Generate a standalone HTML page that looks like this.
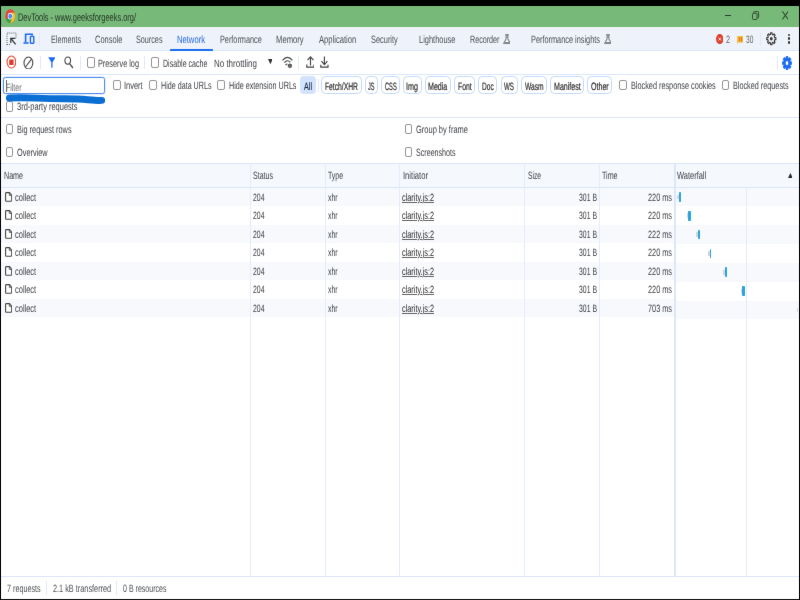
<!DOCTYPE html>
<html><head><meta charset="utf-8"><title>DevTools - www.geeksforgeeks.org/</title>
<style>
html,body{margin:0;padding:0;width:800px;height:600px;overflow:hidden;background:#000;}
body{position:relative;font-family:"Liberation Sans",sans-serif;text-rendering:geometricPrecision;}
#w{position:absolute;left:0;top:0;width:800px;height:600px;filter:url(#soft);}
.r{position:absolute;display:block;}
.t{position:absolute;display:block;white-space:nowrap;line-height:1;}
.cb{position:absolute;border:1px solid #949494;border-radius:2px;background:#fff;}
</style></head><body>
<svg width="0" height="0" style="position:absolute"><filter id="soft" x="0" y="0" width="100%" height="100%" color-interpolation-filters="sRGB"><feConvolveMatrix order="3" kernelMatrix="0 0.055 0 0.055 0.78 0.055 0 0.055 0" edgeMode="duplicate" preserveAlpha="true"/></filter></svg>
<div id="w">
<div class="r" style="left:-20.00px;top:-20.00px;width:840.00px;height:640.00px;background:#000;"></div>
<div class="r" style="left:1.00px;top:6.20px;width:797.75px;height:20.80px;background:#77b979;"></div>
<div class="r" style="left:1.00px;top:27.00px;width:797.75px;height:23.00px;background:#eef2fa;"></div>
<div class="r" style="left:1.00px;top:50.00px;width:797.75px;height:548.60px;background:#fff;"></div>
<div class="r" style="left:1.00px;top:50.00px;width:797.75px;height:1.00px;background:#dbe6fb;"></div>
<div class="r" style="left:1.00px;top:73.50px;width:797.75px;height:1.00px;background:#dbe6fb;"></div>
<div class="r" style="left:1.00px;top:117.00px;width:797.75px;height:1.00px;background:#dbe6fb;"></div>
<span class="t" style="left:18.00px;transform-origin:0 0;top:13.00px;font-size:11px;color:#243524;transform:scaleX(0.6748);">DevTools - www.geeksforgeeks.org/</span>
<svg class="r" style="left:4.90px;top:9.30px;" width="10.50" height="14.30" viewBox="0 0 20 20" preserveAspectRatio="none"><circle cx="10" cy="10" r="9.5" fill="#e8453c"/>
<path d="M10 10 L1.8 14.8 A9.5 9.5 0 0 0 10 19.5 L14.2 12.4 Z" fill="#2da94f"/>
<path d="M10 10 L14.2 12.4 L10 19.5 A9.5 9.5 0 0 0 18.2 5.2 L10 5.2 Z" fill="#fbc116"/>
<circle cx="10" cy="10" r="4.6" fill="#fff"/><circle cx="10" cy="10" r="3.6" fill="#4a8af4"/></svg>
<div class="r" style="left:724.60px;top:14.80px;width:6.60px;height:0.90px;background:#2a402a;"></div>
<svg class="r" style="left:752.40px;top:10.80px;" width="7.20" height="9.20" viewBox="0 0 8 9.5" preserveAspectRatio="none"><rect x="0.6" y="2.4" width="5" height="6.4" rx="1" fill="none" stroke="#2a402a" stroke-width="0.95"/><path d="M2 2.2 V1.4 Q2 0.6 2.8 0.6 H6.4 Q7.3 0.6 7.3 1.5 V6.5 Q7.3 7.3 6.4 7.3" fill="none" stroke="#2a402a" stroke-width="0.95"/></svg>
<svg class="r" style="left:781.80px;top:11.20px;" width="6.60" height="8.70" viewBox="0 0 7.5 8" preserveAspectRatio="none"><path d="M0.4 0.3 L7.1 7.7 M7.1 0.3 L0.4 7.7" stroke="#2a402a" stroke-width="0.95" fill="none"/></svg>
<svg class="r" style="left:5.50px;top:32.00px;" width="11.00" height="13.50" viewBox="0 0 11 13.5" preserveAspectRatio="none"><path d="M1 13 V1 H10 V6" fill="none" stroke="#5a5a5a" stroke-width="1" stroke-dasharray="1 1.05"/><path d="M1 12.6 H4.4" fill="none" stroke="#5a5a5a" stroke-width="1" stroke-dasharray="1 1.05"/><path d="M4.9 6.4 L9.6 12.3" stroke="#333" stroke-width="1.3" fill="none"/><path d="M4.8 11 V6.3 H9.4" stroke="#333" stroke-width="1.2" fill="none"/></svg>
<svg class="r" style="left:22.50px;top:33.00px;" width="12.00" height="11.50" viewBox="0 0 12 11.5" preserveAspectRatio="none"><path d="M2.6 9.2 V1.3 H10" fill="none" stroke="#1b6af2" stroke-width="1.6"/><rect x="7.4" y="3.3" width="3.4" height="7" rx="0.8" fill="none" stroke="#1b6af2" stroke-width="1.4"/><path d="M0.5 10 H5.6" stroke="#1b6af2" stroke-width="1.6"/></svg>
<div class="r" style="left:39.40px;top:32.00px;width:1.00px;height:13.60px;background:#e1e9fa;"></div>
<span class="t" style="left:51.00px;transform-origin:0 0;top:35.00px;font-size:10.6px;color:#4d5055;transform:scaleX(0.6789);">Elements</span>
<span class="t" style="left:95.00px;transform-origin:0 0;top:35.00px;font-size:10.6px;color:#4d5055;transform:scaleX(0.7071);">Console</span>
<span class="t" style="left:136.00px;transform-origin:0 0;top:35.00px;font-size:10.6px;color:#4d5055;transform:scaleX(0.6815);">Sources</span>
<span class="t" style="left:220.00px;transform-origin:0 0;top:35.00px;font-size:10.6px;color:#4d5055;transform:scaleX(0.6872);">Performance</span>
<span class="t" style="left:276.00px;transform-origin:0 0;top:35.00px;font-size:10.6px;color:#4d5055;transform:scaleX(0.7236);">Memory</span>
<span class="t" style="left:318.70px;transform-origin:0 0;top:35.00px;font-size:10.6px;color:#4d5055;transform:scaleX(0.7193);">Application</span>
<span class="t" style="left:370.70px;transform-origin:0 0;top:35.00px;font-size:10.6px;color:#4d5055;transform:scaleX(0.6999);">Security</span>
<span class="t" style="left:419.00px;transform-origin:0 0;top:35.00px;font-size:10.6px;color:#4d5055;transform:scaleX(0.7037);">Lighthouse</span>
<span class="t" style="left:470.00px;transform-origin:0 0;top:35.00px;font-size:10.6px;color:#4d5055;transform:scaleX(0.6766);">Recorder</span>
<span class="t" style="left:531.00px;transform-origin:0 0;top:35.00px;font-size:10.6px;color:#4d5055;transform:scaleX(0.6930);">Performance insights</span>
<span class="t" style="left:177.40px;transform-origin:0 0;top:35.00px;font-size:10.6px;color:#2468e0;transform:scaleX(0.7202);">Network</span>
<div class="r" style="left:170.00px;top:49.00px;width:43.30px;height:2.00px;background:#1a6df0;border-radius:1px 1px 0 0;"></div>
<svg class="r" style="left:502.70px;top:33.60px;" width="7.80" height="10.50" viewBox="0 0 8 10.6" preserveAspectRatio="none"><path d="M2.3 0.85 H5.9" stroke="#555" stroke-width="1"/><path d="M3.25 1.2 V4.8 L0.8 9.2 Q0.5 10 1.3 10 H6.9 Q7.7 10 7.4 9.2 L4.95 4.8 V1.2" fill="none" stroke="#555" stroke-width="0.9"/><path d="M1.2 9.6 L2 8.3 H6.2 L7 9.6 Z" fill="#666"/></svg>
<svg class="r" style="left:603.70px;top:33.60px;" width="7.80" height="10.50" viewBox="0 0 8 10.6" preserveAspectRatio="none"><path d="M2.3 0.85 H5.9" stroke="#555" stroke-width="1"/><path d="M3.25 1.2 V4.8 L0.8 9.2 Q0.5 10 1.3 10 H6.9 Q7.7 10 7.4 9.2 L4.95 4.8 V1.2" fill="none" stroke="#555" stroke-width="0.9"/><path d="M1.2 9.6 L2 8.3 H6.2 L7 9.6 Z" fill="#666"/></svg>
<svg class="r" style="left:715.90px;top:33.80px;" width="7.50" height="10.10" viewBox="0 0 7 10" preserveAspectRatio="none"><ellipse cx="3.5" cy="5" rx="3.5" ry="5" fill="#e0402e"/><path d="M2.4 3.6 L4.6 6.4 M4.6 3.6 L2.4 6.4" stroke="#fff" stroke-width="0.8"/></svg>
<span class="t" style="left:725.90px;transform-origin:0 0;top:35.00px;font-size:10.6px;color:#666;transform:scaleX(0.6955);">2</span>
<svg class="r" style="left:736.90px;top:35.50px;" width="6.20" height="8.00" viewBox="0 0 6.2 8" preserveAspectRatio="none"><path d="M0.1 0.5 Q0.1 0.1 0.5 0.1 H5.7 Q6.1 0.1 6.1 0.5 V6.1 Q6.1 6.5 5.7 6.5 H1.4 L0.1 7.9 Z" fill="#f3bf2e"/><rect x="1.9" y="1.2" width="1" height="4.2" fill="#e8663a"/><path d="M3.6 1.6 H5 M3.6 3.3 H5 M3.6 5 H5 M4.6 1.4 V5.2" stroke="#e8663a" stroke-width="0.8" fill="none"/></svg>
<span class="t" style="left:745.75px;transform-origin:0 0;top:35.00px;font-size:10.6px;color:#666;transform:scaleX(0.6234);">30</span>
<div class="r" style="left:760.00px;top:33.00px;width:1.00px;height:12.50px;background:#e1e9fa;"></div>
<svg class="r" style="left:766.40px;top:32.40px;" width="10.60" height="13.40" viewBox="0 0 20 20" preserveAspectRatio="none"><path d="M8.41 3.59 L8.56 1.32 L11.44 1.32 L11.59 3.59 L13.40 4.35 L15.12 2.84 L17.16 4.88 L15.65 6.60 L16.41 8.41 L18.68 8.56 L18.68 11.44 L16.41 11.59 L15.65 13.40 L17.16 15.12 L15.12 17.16 L13.40 15.65 L11.59 16.41 L11.44 18.68 L8.56 18.68 L8.41 16.41 L6.60 15.65 L4.88 17.16 L2.84 15.12 L4.35 13.40 L3.59 11.59 L1.32 11.44 L1.32 8.56 L3.59 8.41 L4.35 6.60 L2.84 4.88 L4.88 2.84 L6.60 4.35 Z" fill="none" stroke="#3a3a3a" stroke-width="2" stroke-linejoin="round"/><circle cx="10" cy="10" r="2.7" fill="#3a3a3a"/></svg>
<div class="r" style="left:787.60px;top:33.55px;width:2.60px;height:2.40px;background:#333;border-radius:1.2px;"></div>
<div class="r" style="left:787.60px;top:37.40px;width:2.60px;height:2.40px;background:#333;border-radius:1.2px;"></div>
<div class="r" style="left:787.60px;top:41.30px;width:2.60px;height:2.40px;background:#333;border-radius:1.2px;"></div>
<svg class="r" style="left:5.60px;top:55.40px;" width="10.80" height="14.00" viewBox="0 0 10.8 14" preserveAspectRatio="none"><ellipse cx="5.4" cy="7" rx="4.35" ry="5.95" fill="none" stroke="#e0472f" stroke-width="1.1"/><rect x="3.2" y="4.5" width="4.4" height="5.5" rx="0.5" fill="#de3b2e"/></svg>
<svg class="r" style="left:22.80px;top:55.50px;" width="10.80" height="13.90" viewBox="0 0 10.8 13.9" preserveAspectRatio="none"><ellipse cx="5.4" cy="7" rx="4.4" ry="6" fill="none" stroke="#444" stroke-width="1.05"/><path d="M8.7 2.9 L2.5 11" stroke="#444" stroke-width="1.05"/></svg>
<div class="r" style="left:39.60px;top:56.00px;width:1.00px;height:13.40px;background:#e1e9fa;"></div>
<svg class="r" style="left:47.70px;top:57.20px;" width="7.80" height="11.10" viewBox="0 0 8 11.3" preserveAspectRatio="none"><path d="M0.2 0.3 H7.8 L4.65 5.4 V10.7 Q4 11.3 3.35 10.7 V5.4 Z" fill="#1b6af2"/></svg>
<svg class="r" style="left:63.90px;top:56.40px;" width="9.80" height="12.80" viewBox="0 0 10 12.8" preserveAspectRatio="none"><ellipse cx="3.8" cy="4.6" rx="2.9" ry="3.6" fill="none" stroke="#444" stroke-width="1.1"/><path d="M5.7 7.6 L9.1 12" stroke="#444" stroke-width="1.25"/></svg>
<div class="r" style="left:80.10px;top:56.00px;width:1.00px;height:13.50px;background:#e1e9fa;"></div>
<div class="cb" style="left:86.70px;top:57.30px;width:5.90px;height:8.40px;"></div>
<span class="t" style="left:98.00px;transform-origin:0 0;top:59.00px;font-size:10.6px;color:#3b3e43;transform:scaleX(0.6890);">Preserve log</span>
<div class="r" style="left:144.30px;top:56.00px;width:1.00px;height:13.00px;background:#e1e9fa;"></div>
<div class="cb" style="left:150.90px;top:57.30px;width:5.90px;height:8.40px;"></div>
<span class="t" style="left:162.50px;transform-origin:0 0;top:59.00px;font-size:10.6px;color:#3b3e43;transform:scaleX(0.6683);">Disable cache</span>
<span class="t" style="left:214.00px;transform-origin:0 0;top:59.00px;font-size:10.6px;color:#3b3e43;transform:scaleX(0.7524);">No throttling</span>
<svg class="r" style="left:267.60px;top:59.40px;" width="4.80" height="5.20" viewBox="0 0 5 5" preserveAspectRatio="none"><path d="M0 0 H5 L2.5 5 Z" fill="#333"/></svg>
<svg class="r" style="left:281.80px;top:56.00px;" width="11.40" height="12.60" viewBox="0 0 11.4 12.6" preserveAspectRatio="none"><path d="M0.5 4.4 Q5.4 -1.6 10.4 4.4" fill="none" stroke="#444" stroke-width="1.15"/><path d="M2.4 6.7 Q5.4 3 8.4 6.4" fill="none" stroke="#444" stroke-width="1.15"/><path d="M3.6 9.2 Q4.4 8 5.4 8" fill="none" stroke="#444" stroke-width="1.2"/><circle cx="7.9" cy="9.8" r="1.5" fill="none" stroke="#555" stroke-width="1.3"/><path d="M7.9 7.4 V12.2 M5.8 8.6 L10 11 M5.8 11 L10 8.6" stroke="#555" stroke-width="0.7"/></svg>
<div class="r" style="left:298.00px;top:56.00px;width:1.00px;height:13.50px;background:#e1e9fa;"></div>
<svg class="r" style="left:305.60px;top:56.40px;" width="8.80" height="12.20" viewBox="0 0 8.8 12.2" preserveAspectRatio="none"><path d="M4.5 9.4 V1.2 M1.5 4.2 L4.5 0.9 L7.5 4.2" fill="none" stroke="#444" stroke-width="1.15"/><path d="M0.8 8.6 V11.2 H8 V8.6" fill="none" stroke="#444" stroke-width="1.15"/></svg>
<svg class="r" style="left:320.40px;top:56.40px;" width="8.80" height="12.20" viewBox="0 0 8.8 12.2" preserveAspectRatio="none"><path d="M4.4 0.6 V8.2 M1.4 5.2 L4.4 8.6 L7.4 5.2" fill="none" stroke="#444" stroke-width="1.15"/><path d="M0.8 8.8 V11.2 H8 V8.8" fill="none" stroke="#444" stroke-width="1.15"/></svg>
<div class="r" style="left:777.20px;top:56.00px;width:1.00px;height:13.50px;background:#e1e9fa;"></div>
<svg class="r" style="left:781.60px;top:55.80px;" width="10.00" height="14.20" viewBox="0 0 20 20" preserveAspectRatio="none"><path fill-rule="evenodd" d="M7.99 3.09 L8.13 0.58 L11.87 0.58 L12.01 3.09 L13.47 3.69 L15.33 2.02 L17.98 4.67 L16.31 6.53 L16.91 7.99 L19.42 8.13 L19.42 11.87 L16.91 12.01 L16.31 13.47 L17.98 15.33 L15.33 17.98 L13.47 16.31 L12.01 16.91 L11.87 19.42 L8.13 19.42 L7.99 16.91 L6.53 16.31 L4.67 17.98 L2.02 15.33 L3.69 13.47 L3.09 12.01 L0.58 11.87 L0.58 8.13 L3.09 7.99 L3.69 6.53 L2.02 4.67 L4.67 2.02 L6.53 3.69 Z M10 6.6 a3.4 3.4 0 1 0 0.001 0 z" fill="#1b6af2" stroke="#1b6af2" stroke-width="1.2" stroke-linejoin="round"/></svg>
<div class="r" style="left:3.2px;top:76.7px;width:99.8px;height:15.2px;border:1px solid #4f8ef0;border-radius:2.5px;background:#fff;box-shadow:0 0 0 0.5px #c9dcfa;"></div>
<div class="r" style="left:5.70px;top:79.60px;width:0.80px;height:12.80px;background:#666;"></div>
<span class="t" style="left:6.20px;transform-origin:0 0;top:83.00px;font-size:10.6px;color:#686c72;transform:scaleX(0.6580);">Filter</span>
<svg class="r" style="left:4.00px;top:93.00px;z-index:5;" width="104.00" height="13.00" viewBox="0 0 104 13" preserveAspectRatio="none"><path d="M5.4 5.0 Q18 4.5 32 5.1 T60 5.7 T84 6.7 T97.7 7.4" fill="none" stroke="#0b6fd4" stroke-width="6.9" stroke-linecap="round" stroke-linejoin="round"/></svg>
<div class="cb" style="left:112.90px;top:80.00px;width:5.90px;height:8.40px;"></div>
<span class="t" style="left:124.40px;transform-origin:0 0;top:81.00px;font-size:10.6px;color:#3b3e43;transform:scaleX(0.7016);">Invert</span>
<div class="cb" style="left:149.20px;top:80.00px;width:5.90px;height:8.40px;"></div>
<span class="t" style="left:160.70px;transform-origin:0 0;top:81.00px;font-size:10.6px;color:#3b3e43;transform:scaleX(0.6749);">Hide data URLs</span>
<div class="cb" style="left:217.20px;top:80.00px;width:5.90px;height:8.40px;"></div>
<span class="t" style="left:228.70px;transform-origin:0 0;top:81.00px;font-size:10.6px;color:#3b3e43;transform:scaleX(0.6779);">Hide extension URLs</span>
<div class="r" style="left:299.9px;top:76.1px;width:16px;height:18.4px;border-radius:4px;background:#d3e3fd;"></div>
<span class="t" style="left:303.70px;transform-origin:0 0;top:82.00px;font-size:10.6px;color:#1d2a44;transform:scaleX(0.6791);-webkit-text-stroke:0.2px #1d2a44;">All</span>
<div class="r" style="left:318.10px;top:78.80px;width:0.90px;height:13.20px;background:#e1e9fa;"></div>
<div class="r" style="left:321.2px;top:76.1px;width:38.50px;height:16.4px;border:1px solid #c3d9fb;border-radius:4.5px;background:#fff;"></div>
<span class="t" style="left:325.00px;transform-origin:0 0;top:82.00px;font-size:10.6px;color:#2a2a2a;transform:scaleX(0.6366);-webkit-text-stroke:0.2px #2a2a2a;">Fetch/XHR</span>
<div class="r" style="left:364.5px;top:76.1px;width:11.50px;height:16.4px;border:1px solid #c3d9fb;border-radius:4.5px;background:#fff;"></div>
<span class="t" style="left:368.00px;transform-origin:0 0;top:82.00px;font-size:10.6px;color:#2a2a2a;transform:scaleX(0.5254);-webkit-text-stroke:0.2px #2a2a2a;">JS</span>
<div class="r" style="left:380.7px;top:76.1px;width:17.30px;height:16.4px;border:1px solid #c3d9fb;border-radius:4.5px;background:#fff;"></div>
<span class="t" style="left:384.50px;transform-origin:0 0;top:82.00px;font-size:10.6px;color:#2a2a2a;transform:scaleX(0.5368);-webkit-text-stroke:0.2px #2a2a2a;">CSS</span>
<div class="r" style="left:402.5px;top:76.1px;width:17.50px;height:16.4px;border:1px solid #c3d9fb;border-radius:4.5px;background:#fff;"></div>
<span class="t" style="left:406.20px;transform-origin:0 0;top:82.00px;font-size:10.6px;color:#2a2a2a;transform:scaleX(0.6791);-webkit-text-stroke:0.2px #2a2a2a;">Img</span>
<div class="r" style="left:424.5px;top:76.1px;width:24.70px;height:16.4px;border:1px solid #c3d9fb;border-radius:4.5px;background:#fff;"></div>
<span class="t" style="left:428.20px;transform-origin:0 0;top:82.00px;font-size:10.6px;color:#2a2a2a;transform:scaleX(0.6685);-webkit-text-stroke:0.2px #2a2a2a;">Media</span>
<div class="r" style="left:454.2px;top:76.1px;width:19.30px;height:16.4px;border:1px solid #c3d9fb;border-radius:4.5px;background:#fff;"></div>
<span class="t" style="left:458.00px;transform-origin:0 0;top:82.00px;font-size:10.6px;color:#2a2a2a;transform:scaleX(0.6459);-webkit-text-stroke:0.2px #2a2a2a;">Font</span>
<div class="r" style="left:478.2px;top:76.1px;width:17.30px;height:16.4px;border:1px solid #c3d9fb;border-radius:4.5px;background:#fff;"></div>
<span class="t" style="left:482.00px;transform-origin:0 0;top:82.00px;font-size:10.6px;color:#2a2a2a;transform:scaleX(0.6207);-webkit-text-stroke:0.2px #2a2a2a;">Doc</span>
<div class="r" style="left:500.5px;top:76.1px;width:15.50px;height:16.4px;border:1px solid #c3d9fb;border-radius:4.5px;background:#fff;"></div>
<span class="t" style="left:504.20px;transform-origin:0 0;top:82.00px;font-size:10.6px;color:#2a2a2a;transform:scaleX(0.5856);-webkit-text-stroke:0.2px #2a2a2a;">WS</span>
<div class="r" style="left:520.5px;top:76.1px;width:24.50px;height:16.4px;border:1px solid #c3d9fb;border-radius:4.5px;background:#fff;"></div>
<span class="t" style="left:524.50px;transform-origin:0 0;top:82.00px;font-size:10.6px;color:#2a2a2a;transform:scaleX(0.6310);-webkit-text-stroke:0.2px #2a2a2a;">Wasm</span>
<div class="r" style="left:550px;top:76.1px;width:32.20px;height:16.4px;border:1px solid #c3d9fb;border-radius:4.5px;background:#fff;"></div>
<span class="t" style="left:553.70px;transform-origin:0 0;top:82.00px;font-size:10.6px;color:#2a2a2a;transform:scaleX(0.6690);-webkit-text-stroke:0.2px #2a2a2a;">Manifest</span>
<div class="r" style="left:586.7px;top:76.1px;width:23.30px;height:16.4px;border:1px solid #c3d9fb;border-radius:4.5px;background:#fff;"></div>
<span class="t" style="left:590.50px;transform-origin:0 0;top:82.00px;font-size:10.6px;color:#2a2a2a;transform:scaleX(0.6677);-webkit-text-stroke:0.2px #2a2a2a;">Other</span>
<div class="cb" style="left:619.40px;top:80.00px;width:5.90px;height:8.40px;"></div>
<span class="t" style="left:630.70px;transform-origin:0 0;top:81.00px;font-size:10.6px;color:#3b3e43;transform:scaleX(0.6886);">Blocked response cookies</span>
<div class="cb" style="left:721.60px;top:80.00px;width:5.90px;height:8.40px;"></div>
<span class="t" style="left:733.00px;transform-origin:0 0;top:81.00px;font-size:10.6px;color:#3b3e43;transform:scaleX(0.6850);">Blocked requests</span>
<div class="cb" style="left:5.50px;top:101.20px;width:5.90px;height:8.40px;"></div>
<span class="t" style="left:17.00px;transform-origin:0 0;top:102.00px;font-size:10.6px;color:#3b3e43;transform:scaleX(0.7045);">3rd-party requests</span>
<div class="cb" style="left:5.50px;top:124.00px;width:5.90px;height:8.40px;"></div>
<span class="t" style="left:17.00px;transform-origin:0 0;top:125.00px;font-size:10.6px;color:#3b3e43;transform:scaleX(0.6916);">Big request rows</span>
<div class="cb" style="left:5.50px;top:147.10px;width:5.90px;height:8.40px;"></div>
<span class="t" style="left:17.00px;transform-origin:0 0;top:148.00px;font-size:10.6px;color:#3b3e43;transform:scaleX(0.6927);">Overview</span>
<div class="cb" style="left:404.60px;top:124.00px;width:5.90px;height:8.40px;"></div>
<span class="t" style="left:416.00px;transform-origin:0 0;top:125.00px;font-size:10.6px;color:#3b3e43;transform:scaleX(0.7061);">Group by frame</span>
<div class="cb" style="left:404.60px;top:147.10px;width:5.90px;height:8.40px;"></div>
<span class="t" style="left:416.00px;transform-origin:0 0;top:148.00px;font-size:10.6px;color:#3b3e43;transform:scaleX(0.6721);">Screenshots</span>
<div class="r" style="left:1.00px;top:163.00px;width:797.75px;height:24.50px;background:#f5f8fd;"></div>
<div class="r" style="left:1.00px;top:163.00px;width:797.75px;height:1.00px;background:#dbe6fb;"></div>
<div class="r" style="left:1.00px;top:187.00px;width:797.75px;height:1.00px;background:#dbe6fb;"></div>
<div class="r" style="left:1.00px;top:187.50px;width:673.00px;height:18.50px;background:#f7f9fd;"></div>
<div class="r" style="left:674.00px;top:187.50px;width:124.75px;height:18.85px;background:#f7f9fd;"></div>
<div class="r" style="left:1.00px;top:224.50px;width:673.00px;height:18.50px;background:#f7f9fd;"></div>
<div class="r" style="left:674.00px;top:225.20px;width:124.75px;height:18.85px;background:#f7f9fd;"></div>
<div class="r" style="left:1.00px;top:261.50px;width:673.00px;height:18.50px;background:#f7f9fd;"></div>
<div class="r" style="left:674.00px;top:262.90px;width:124.75px;height:18.85px;background:#f7f9fd;"></div>
<div class="r" style="left:1.00px;top:298.50px;width:673.00px;height:18.50px;background:#f7f9fd;"></div>
<div class="r" style="left:674.00px;top:300.60px;width:124.75px;height:18.85px;background:#f7f9fd;"></div>
<div class="r" style="left:673.90px;top:163.00px;width:1.70px;height:413.00px;background:#dde7fb;"></div>
<div class="r" style="left:249.70px;top:163.00px;width:1.00px;height:413.00px;background:#e4ecfb;"></div>
<div class="r" style="left:325.00px;top:163.00px;width:1.00px;height:413.00px;background:#e4ecfb;"></div>
<div class="r" style="left:398.90px;top:163.00px;width:1.00px;height:413.00px;background:#e4ecfb;"></div>
<div class="r" style="left:524.10px;top:163.00px;width:1.00px;height:413.00px;background:#e4ecfb;"></div>
<div class="r" style="left:599.10px;top:163.00px;width:1.00px;height:413.00px;background:#e4ecfb;"></div>
<div class="r" style="left:746.20px;top:188.00px;width:1.00px;height:388.00px;background:#e4ecfb;"></div>
<span class="t" style="left:3.60px;transform-origin:0 0;top:171.00px;font-size:10.6px;color:#3b3e43;transform:scaleX(0.6719);">Name</span>
<span class="t" style="left:253.00px;transform-origin:0 0;top:171.00px;font-size:10.6px;color:#3b3e43;transform:scaleX(0.6655);">Status</span>
<span class="t" style="left:328.00px;transform-origin:0 0;top:171.00px;font-size:10.6px;color:#3b3e43;transform:scaleX(0.6527);">Type</span>
<span class="t" style="left:402.50px;transform-origin:0 0;top:171.00px;font-size:10.6px;color:#3b3e43;transform:scaleX(0.7192);">Initiator</span>
<span class="t" style="left:527.50px;transform-origin:0 0;top:171.00px;font-size:10.6px;color:#3b3e43;transform:scaleX(0.6304);">Size</span>
<span class="t" style="left:602.00px;transform-origin:0 0;top:171.00px;font-size:10.6px;color:#3b3e43;transform:scaleX(0.6735);">Time</span>
<span class="t" style="left:677.40px;transform-origin:0 0;top:171.00px;font-size:10.6px;color:#3b3e43;transform:scaleX(0.7048);">Waterfall</span>
<svg class="r" style="left:787.50px;top:173.30px;" width="4.80" height="4.90" viewBox="0 0 4 4" preserveAspectRatio="none"><path d="M0 4 H4 L2 0 Z" fill="#2a2a2a"/></svg>
<svg class="r" style="left:4.80px;top:191.90px;" width="7.30" height="9.85" viewBox="0 0 7.3 9.85" preserveAspectRatio="none"><path d="M0.6 1.4 Q0.6 0.6 1.4 0.6 H4.5 L6.7 3.2 V8.4 Q6.7 9.25 5.9 9.25 H1.4 Q0.6 9.25 0.6 8.4 Z" fill="#fff" stroke="#444" stroke-width="1.1"/><path d="M4.3 0.8 V3.4 H6.5" fill="none" stroke="#444" stroke-width="0.8"/></svg>
<span class="t" style="left:15.40px;transform-origin:0 0;top:193.00px;font-size:10.6px;color:#3b3e43;transform:scaleX(0.7056);">collect</span>
<span class="t" style="left:253.00px;transform-origin:0 0;top:193.00px;font-size:10.6px;color:#3b3e43;transform:scaleX(0.6502);">204</span>
<span class="t" style="left:328.00px;transform-origin:0 0;top:193.00px;font-size:10.6px;color:#3b3e43;transform:scaleX(0.6451);">xhr</span>
<span class="t" style="left:402.20px;transform-origin:0 0;top:193.00px;font-size:10.6px;color:#2a2a2a;transform:scaleX(0.6906);text-decoration:underline;text-decoration-thickness:0.9px;text-decoration-color:#666;text-underline-offset:0.8px;">clarity.js:2</span>
<span class="t" style="left:578.70px;transform-origin:0 0;top:193.00px;font-size:10.6px;color:#3b3e43;transform:scaleX(0.6498);">301 B</span>
<span class="t" style="left:648.00px;transform-origin:0 0;top:193.00px;font-size:10.6px;color:#3b3e43;transform:scaleX(0.6904);">220 ms</span>
<div class="r" style="left:677.20px;top:194.60px;width:2.00px;height:4.60px;background:#d4d6d9;"></div>
<div class="r" style="left:678.90px;top:192.00px;width:1.90px;height:9.80px;background:#2aa5dc;border-radius:0.8px;"></div>
<svg class="r" style="left:4.80px;top:210.40px;" width="7.30" height="9.85" viewBox="0 0 7.3 9.85" preserveAspectRatio="none"><path d="M0.6 1.4 Q0.6 0.6 1.4 0.6 H4.5 L6.7 3.2 V8.4 Q6.7 9.25 5.9 9.25 H1.4 Q0.6 9.25 0.6 8.4 Z" fill="#fff" stroke="#444" stroke-width="1.1"/><path d="M4.3 0.8 V3.4 H6.5" fill="none" stroke="#444" stroke-width="0.8"/></svg>
<span class="t" style="left:15.40px;transform-origin:0 0;top:211.00px;font-size:10.6px;color:#3b3e43;transform:scaleX(0.7056);">collect</span>
<span class="t" style="left:253.00px;transform-origin:0 0;top:211.00px;font-size:10.6px;color:#3b3e43;transform:scaleX(0.6502);">204</span>
<span class="t" style="left:328.00px;transform-origin:0 0;top:211.00px;font-size:10.6px;color:#3b3e43;transform:scaleX(0.6451);">xhr</span>
<span class="t" style="left:402.20px;transform-origin:0 0;top:211.00px;font-size:10.6px;color:#2a2a2a;transform:scaleX(0.6906);text-decoration:underline;text-decoration-thickness:0.9px;text-decoration-color:#666;text-underline-offset:0.8px;">clarity.js:2</span>
<span class="t" style="left:578.70px;transform-origin:0 0;top:211.00px;font-size:10.6px;color:#3b3e43;transform:scaleX(0.6498);">301 B</span>
<span class="t" style="left:648.00px;transform-origin:0 0;top:211.00px;font-size:10.6px;color:#3b3e43;transform:scaleX(0.6904);">220 ms</span>
<div class="r" style="left:686.50px;top:213.45px;width:2.10px;height:4.60px;background:#d4d6d9;"></div>
<div class="r" style="left:688.30px;top:210.85px;width:2.50px;height:9.80px;background:#2aa5dc;border-radius:0.8px;"></div>
<svg class="r" style="left:4.80px;top:228.90px;" width="7.30" height="9.85" viewBox="0 0 7.3 9.85" preserveAspectRatio="none"><path d="M0.6 1.4 Q0.6 0.6 1.4 0.6 H4.5 L6.7 3.2 V8.4 Q6.7 9.25 5.9 9.25 H1.4 Q0.6 9.25 0.6 8.4 Z" fill="#fff" stroke="#444" stroke-width="1.1"/><path d="M4.3 0.8 V3.4 H6.5" fill="none" stroke="#444" stroke-width="0.8"/></svg>
<span class="t" style="left:15.40px;transform-origin:0 0;top:230.00px;font-size:10.6px;color:#3b3e43;transform:scaleX(0.7056);">collect</span>
<span class="t" style="left:253.00px;transform-origin:0 0;top:230.00px;font-size:10.6px;color:#3b3e43;transform:scaleX(0.6502);">204</span>
<span class="t" style="left:328.00px;transform-origin:0 0;top:230.00px;font-size:10.6px;color:#3b3e43;transform:scaleX(0.6451);">xhr</span>
<span class="t" style="left:402.20px;transform-origin:0 0;top:230.00px;font-size:10.6px;color:#2a2a2a;transform:scaleX(0.6906);text-decoration:underline;text-decoration-thickness:0.9px;text-decoration-color:#666;text-underline-offset:0.8px;">clarity.js:2</span>
<span class="t" style="left:578.70px;transform-origin:0 0;top:230.00px;font-size:10.6px;color:#3b3e43;transform:scaleX(0.6498);">301 B</span>
<span class="t" style="left:648.00px;transform-origin:0 0;top:230.00px;font-size:10.6px;color:#3b3e43;transform:scaleX(0.6904);">222 ms</span>
<div class="r" style="left:696.20px;top:232.30px;width:2.30px;height:4.60px;background:#d4d6d9;"></div>
<div class="r" style="left:698.20px;top:229.70px;width:1.80px;height:9.80px;background:#2aa5dc;border-radius:0.8px;"></div>
<svg class="r" style="left:4.80px;top:247.40px;" width="7.30" height="9.85" viewBox="0 0 7.3 9.85" preserveAspectRatio="none"><path d="M0.6 1.4 Q0.6 0.6 1.4 0.6 H4.5 L6.7 3.2 V8.4 Q6.7 9.25 5.9 9.25 H1.4 Q0.6 9.25 0.6 8.4 Z" fill="#fff" stroke="#444" stroke-width="1.1"/><path d="M4.3 0.8 V3.4 H6.5" fill="none" stroke="#444" stroke-width="0.8"/></svg>
<span class="t" style="left:15.40px;transform-origin:0 0;top:248.00px;font-size:10.6px;color:#3b3e43;transform:scaleX(0.7056);">collect</span>
<span class="t" style="left:253.00px;transform-origin:0 0;top:248.00px;font-size:10.6px;color:#3b3e43;transform:scaleX(0.6502);">204</span>
<span class="t" style="left:328.00px;transform-origin:0 0;top:248.00px;font-size:10.6px;color:#3b3e43;transform:scaleX(0.6451);">xhr</span>
<span class="t" style="left:402.20px;transform-origin:0 0;top:248.00px;font-size:10.6px;color:#2a2a2a;transform:scaleX(0.6906);text-decoration:underline;text-decoration-thickness:0.9px;text-decoration-color:#666;text-underline-offset:0.8px;">clarity.js:2</span>
<span class="t" style="left:578.70px;transform-origin:0 0;top:248.00px;font-size:10.6px;color:#3b3e43;transform:scaleX(0.6498);">301 B</span>
<span class="t" style="left:648.00px;transform-origin:0 0;top:248.00px;font-size:10.6px;color:#3b3e43;transform:scaleX(0.6904);">220 ms</span>
<div class="r" style="left:707.80px;top:251.15px;width:2.00px;height:4.60px;background:#d4d6d9;"></div>
<div class="r" style="left:709.50px;top:248.55px;width:1.80px;height:9.80px;background:#2aa5dc;border-radius:0.8px;"></div>
<svg class="r" style="left:4.80px;top:265.90px;" width="7.30" height="9.85" viewBox="0 0 7.3 9.85" preserveAspectRatio="none"><path d="M0.6 1.4 Q0.6 0.6 1.4 0.6 H4.5 L6.7 3.2 V8.4 Q6.7 9.25 5.9 9.25 H1.4 Q0.6 9.25 0.6 8.4 Z" fill="#fff" stroke="#444" stroke-width="1.1"/><path d="M4.3 0.8 V3.4 H6.5" fill="none" stroke="#444" stroke-width="0.8"/></svg>
<span class="t" style="left:15.40px;transform-origin:0 0;top:267.00px;font-size:10.6px;color:#3b3e43;transform:scaleX(0.7056);">collect</span>
<span class="t" style="left:253.00px;transform-origin:0 0;top:267.00px;font-size:10.6px;color:#3b3e43;transform:scaleX(0.6502);">204</span>
<span class="t" style="left:328.00px;transform-origin:0 0;top:267.00px;font-size:10.6px;color:#3b3e43;transform:scaleX(0.6451);">xhr</span>
<span class="t" style="left:402.20px;transform-origin:0 0;top:267.00px;font-size:10.6px;color:#2a2a2a;transform:scaleX(0.6906);text-decoration:underline;text-decoration-thickness:0.9px;text-decoration-color:#666;text-underline-offset:0.8px;">clarity.js:2</span>
<span class="t" style="left:578.70px;transform-origin:0 0;top:267.00px;font-size:10.6px;color:#3b3e43;transform:scaleX(0.6498);">301 B</span>
<span class="t" style="left:648.00px;transform-origin:0 0;top:267.00px;font-size:10.6px;color:#3b3e43;transform:scaleX(0.6904);">220 ms</span>
<div class="r" style="left:722.80px;top:270.00px;width:2.20px;height:4.60px;background:#d4d6d9;"></div>
<div class="r" style="left:724.70px;top:267.40px;width:2.50px;height:9.80px;background:#2aa5dc;border-radius:0.8px;"></div>
<svg class="r" style="left:4.80px;top:284.40px;" width="7.30" height="9.85" viewBox="0 0 7.3 9.85" preserveAspectRatio="none"><path d="M0.6 1.4 Q0.6 0.6 1.4 0.6 H4.5 L6.7 3.2 V8.4 Q6.7 9.25 5.9 9.25 H1.4 Q0.6 9.25 0.6 8.4 Z" fill="#fff" stroke="#444" stroke-width="1.1"/><path d="M4.3 0.8 V3.4 H6.5" fill="none" stroke="#444" stroke-width="0.8"/></svg>
<span class="t" style="left:15.40px;transform-origin:0 0;top:285.00px;font-size:10.6px;color:#3b3e43;transform:scaleX(0.7056);">collect</span>
<span class="t" style="left:253.00px;transform-origin:0 0;top:285.00px;font-size:10.6px;color:#3b3e43;transform:scaleX(0.6502);">204</span>
<span class="t" style="left:328.00px;transform-origin:0 0;top:285.00px;font-size:10.6px;color:#3b3e43;transform:scaleX(0.6451);">xhr</span>
<span class="t" style="left:402.20px;transform-origin:0 0;top:285.00px;font-size:10.6px;color:#2a2a2a;transform:scaleX(0.6906);text-decoration:underline;text-decoration-thickness:0.9px;text-decoration-color:#666;text-underline-offset:0.8px;">clarity.js:2</span>
<span class="t" style="left:578.70px;transform-origin:0 0;top:285.00px;font-size:10.6px;color:#3b3e43;transform:scaleX(0.6498);">301 B</span>
<span class="t" style="left:648.00px;transform-origin:0 0;top:285.00px;font-size:10.6px;color:#3b3e43;transform:scaleX(0.6904);">220 ms</span>
<div class="r" style="left:740.60px;top:288.85px;width:2.00px;height:4.60px;background:#d4d6d9;"></div>
<div class="r" style="left:742.30px;top:286.25px;width:2.70px;height:9.80px;background:#2aa5dc;border-radius:0.8px;"></div>
<svg class="r" style="left:4.80px;top:302.90px;" width="7.30" height="9.85" viewBox="0 0 7.3 9.85" preserveAspectRatio="none"><path d="M0.6 1.4 Q0.6 0.6 1.4 0.6 H4.5 L6.7 3.2 V8.4 Q6.7 9.25 5.9 9.25 H1.4 Q0.6 9.25 0.6 8.4 Z" fill="#fff" stroke="#444" stroke-width="1.1"/><path d="M4.3 0.8 V3.4 H6.5" fill="none" stroke="#444" stroke-width="0.8"/></svg>
<span class="t" style="left:15.40px;transform-origin:0 0;top:304.00px;font-size:10.6px;color:#3b3e43;transform:scaleX(0.7056);">collect</span>
<span class="t" style="left:253.00px;transform-origin:0 0;top:304.00px;font-size:10.6px;color:#3b3e43;transform:scaleX(0.6502);">204</span>
<span class="t" style="left:328.00px;transform-origin:0 0;top:304.00px;font-size:10.6px;color:#3b3e43;transform:scaleX(0.6451);">xhr</span>
<span class="t" style="left:402.20px;transform-origin:0 0;top:304.00px;font-size:10.6px;color:#2a2a2a;transform:scaleX(0.6906);text-decoration:underline;text-decoration-thickness:0.9px;text-decoration-color:#666;text-underline-offset:0.8px;">clarity.js:2</span>
<span class="t" style="left:578.70px;transform-origin:0 0;top:304.00px;font-size:10.6px;color:#3b3e43;transform:scaleX(0.6498);">301 B</span>
<span class="t" style="left:648.00px;transform-origin:0 0;top:304.00px;font-size:10.6px;color:#3b3e43;transform:scaleX(0.6904);">703 ms</span>
<div class="r" style="left:796.60px;top:307.70px;width:1.70px;height:4.60px;background:#d4d6d9;"></div>
<div class="r" style="left:1.00px;top:576.00px;width:797.75px;height:1.00px;background:#dbe6fb;"></div>
<span class="t" style="left:7.00px;transform-origin:0 0;top:584.00px;font-size:10.6px;color:#4d5055;transform:scaleX(0.6808);">7 requests</span>
<div class="r" style="left:46.40px;top:581.00px;width:0.80px;height:14.00px;background:#e1e9fa;"></div>
<span class="t" style="left:52.50px;transform-origin:0 0;top:584.00px;font-size:10.6px;color:#4d5055;transform:scaleX(0.6908);">2.1 kB transferred</span>
<div class="r" style="left:116.40px;top:581.00px;width:0.80px;height:14.00px;background:#e1e9fa;"></div>
<span class="t" style="left:122.50px;transform-origin:0 0;top:584.00px;font-size:10.6px;color:#4d5055;transform:scaleX(0.6652);">0 B resources</span>
<div class="r" style="left:0.00px;top:598.50px;width:800.00px;height:0.70px;background:#8a8a8a;"></div>
<div class="r" style="left:0.00px;top:599.20px;width:800.00px;height:1.80px;background:#111;"></div>
</div>
</body></html>
